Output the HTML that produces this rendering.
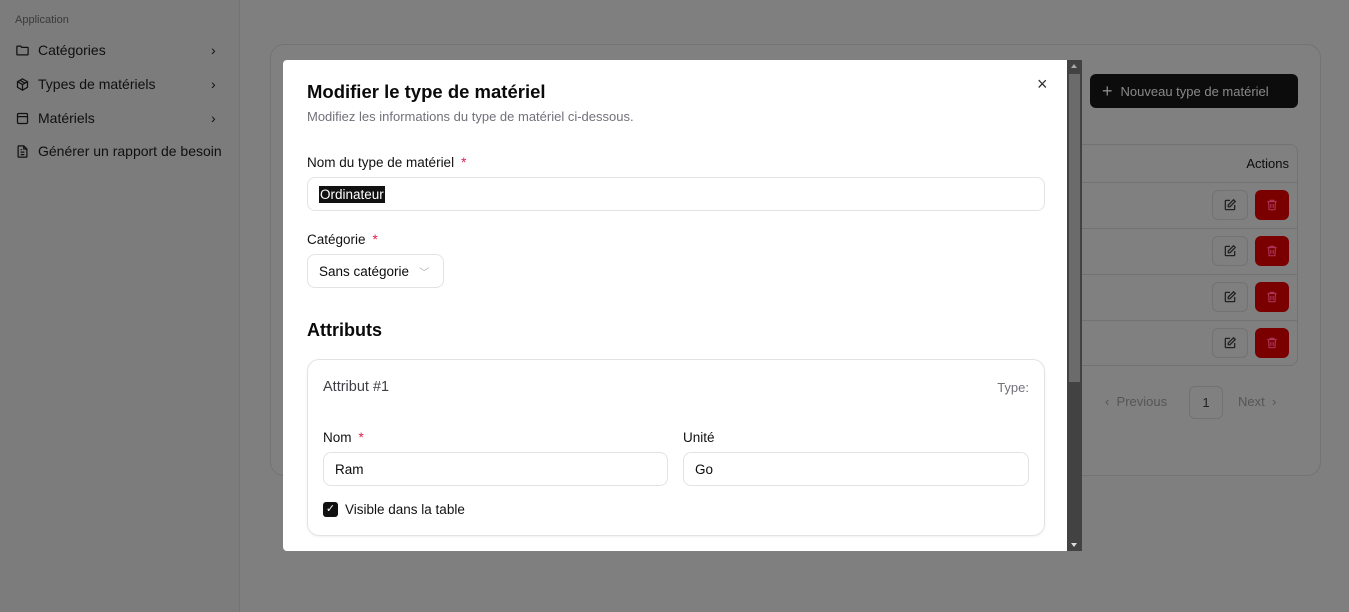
<!DOCTYPE html>
<html><head><meta charset="utf-8"><style>
*{box-sizing:border-box;margin:0;padding:0}
body{width:1349px;height:612px;overflow:hidden;background:#7f7f7f;font-family:"Liberation Sans",sans-serif;color:#0a0a0a;position:relative}
.side{position:absolute;left:0;top:0;width:240px;height:612px;background:#7c7c7c;border-right:1px solid #747474}
.side .h{position:absolute;left:15px;top:14px;font-size:11px;color:#3a3a3a}
.item{position:absolute;left:15px;font-size:14px;color:#0f0f0f;display:flex;align-items:center;gap:8px}
.item svg{width:15px;height:15px}
.chev{position:absolute;left:211px;font-size:14px;color:#111}
.card{position:absolute;left:270px;top:44px;width:1051px;height:432px;border:1px solid #737373;border-radius:14px;background:#808080}
.newbtn{position:absolute;left:1090px;top:74px;width:208px;height:34px;background:#0c0c0c;border-radius:6px;color:#8a8a8a;font-size:13px;display:flex;align-items:center;padding-left:12px;gap:8px}
.tbl{position:absolute;left:1060px;top:144px;width:238px;height:222px;border:1px solid #727272;border-radius:8px}
.tbl .hd{position:absolute;right:8px;top:11px;font-size:13px;color:#0c0c0c}
.row{position:absolute;left:0;right:0;height:1px;background:#727272}
.eb{position:absolute;left:1212px;width:36px;height:30px;border:1px solid #727272;border-radius:6px;background:#7f7f7f;display:flex;align-items:center;justify-content:center}
.db{position:absolute;left:1255px;width:34px;height:30px;border-radius:6px;background:#7a0000;display:flex;align-items:center;justify-content:center}
.pg{position:absolute;top:394px;font-size:13px;color:#555}
.modal{position:absolute;left:283px;top:60px;width:799px;height:491px;background:#fff;border-radius:4px 0 0 4px;overflow:hidden}
.sb{position:absolute;right:0;top:0;width:15px;height:491px;background:#424242}
.sb .th{position:absolute;left:2px;top:14px;width:11px;height:308px;background:#6b6b6b}
.m{position:absolute;left:24px}
.lbl{font-size:13.5px;color:#111}
.req{color:#e11d48;margin-left:7px}
.inp{position:absolute;height:34px;border:1px solid #e3e3e3;border-radius:8px;font-size:13.5px;display:flex;align-items:center;padding-left:11px}
.attr{position:absolute;left:24px;top:299px;width:738px;height:177px;border:1px solid #e3e3e3;border-radius:12px;box-shadow:0 1px 2px rgba(0,0,0,.06)}
</style></head><body>
<div class="side">
<div class="h">Application</div>
<div class="item" style="top:42px"><svg viewBox="0 0 24 24" fill="none" stroke="#111" stroke-width="2"><path d="M3 6a1 1 0 0 1 1-1h5l2 2h9a1 1 0 0 1 1 1v10a1 1 0 0 1-1 1H4a1 1 0 0 1-1-1z"/></svg>Catégories</div>
<div class="chev" style="top:42px">›</div>
<div class="item" style="top:76px"><svg viewBox="0 0 24 24" fill="none" stroke="#111" stroke-width="2"><path d="M12 3l8 4.5v9L12 21l-8-4.5v-9z M4 7.5l8 4.5 8-4.5 M12 12v9 M8 5.3l8 4.5"/></svg>Types de matériels</div>
<div class="chev" style="top:76px">›</div>
<div class="item" style="top:110px"><svg viewBox="0 0 24 24" fill="none" stroke="#111" stroke-width="2"><rect x="4" y="4" width="16" height="16" rx="2"/><path d="M4 9h16"/></svg>Matériels</div>
<div class="chev" style="top:110px">›</div>
<div class="item" style="top:143px"><svg viewBox="0 0 24 24" fill="none" stroke="#111" stroke-width="2"><path d="M14 3H6a1 1 0 0 0-1 1v16a1 1 0 0 0 1 1h12a1 1 0 0 0 1-1V8z M14 3v5h5 M9 13h6 M9 17h6 M9 9h2"/></svg>Générer un rapport de besoin</div>
</div>
<div class="card"></div>
<div class="newbtn"><span style="font-size:18px;font-weight:300">+</span> Nouveau type de matériel</div>
<div class="tbl"><div class="hd">Actions</div>
<div class="row" style="top:37px"></div><div class="row" style="top:83px"></div><div class="row" style="top:129px"></div><div class="row" style="top:175px"></div></div>
<div class="eb" style="top:190px"><svg width="14" height="14" viewBox="0 0 24 24" fill="none" stroke="#222" stroke-width="2.2"><path d="M12 4H5a1 1 0 0 0-1 1v14a1 1 0 0 0 1 1h14a1 1 0 0 0 1-1v-7 M18 3l3 3-9 9H9v-3z"/></svg></div>
<div class="db" style="top:190px"><svg width="14" height="14" viewBox="0 0 24 24" fill="none" stroke="#a35" stroke-width="2"><path d="M4 6h16 M9 6V4h6v2 M6 6l1 14h10l1-14 M10 10v7 M14 10v7"/></svg></div>
<div class="eb" style="top:236px"><svg width="14" height="14" viewBox="0 0 24 24" fill="none" stroke="#222" stroke-width="2.2"><path d="M12 4H5a1 1 0 0 0-1 1v14a1 1 0 0 0 1 1h14a1 1 0 0 0 1-1v-7 M18 3l3 3-9 9H9v-3z"/></svg></div>
<div class="db" style="top:236px"><svg width="14" height="14" viewBox="0 0 24 24" fill="none" stroke="#a35" stroke-width="2"><path d="M4 6h16 M9 6V4h6v2 M6 6l1 14h10l1-14 M10 10v7 M14 10v7"/></svg></div>
<div class="eb" style="top:282px"><svg width="14" height="14" viewBox="0 0 24 24" fill="none" stroke="#222" stroke-width="2.2"><path d="M12 4H5a1 1 0 0 0-1 1v14a1 1 0 0 0 1 1h14a1 1 0 0 0 1-1v-7 M18 3l3 3-9 9H9v-3z"/></svg></div>
<div class="db" style="top:282px"><svg width="14" height="14" viewBox="0 0 24 24" fill="none" stroke="#a35" stroke-width="2"><path d="M4 6h16 M9 6V4h6v2 M6 6l1 14h10l1-14 M10 10v7 M14 10v7"/></svg></div>
<div class="eb" style="top:328px"><svg width="14" height="14" viewBox="0 0 24 24" fill="none" stroke="#222" stroke-width="2.2"><path d="M12 4H5a1 1 0 0 0-1 1v14a1 1 0 0 0 1 1h14a1 1 0 0 0 1-1v-7 M18 3l3 3-9 9H9v-3z"/></svg></div>
<div class="db" style="top:328px"><svg width="14" height="14" viewBox="0 0 24 24" fill="none" stroke="#a35" stroke-width="2"><path d="M4 6h16 M9 6V4h6v2 M6 6l1 14h10l1-14 M10 10v7 M14 10v7"/></svg></div>
<div class="pg" style="left:1105px">‹&nbsp; Previous</div>
<div style="position:absolute;left:1189px;top:386px;width:34px;height:33px;border:1px solid #727272;border-radius:6px;font-size:13px;color:#222;display:flex;align-items:center;justify-content:center">1</div>
<div class="pg" style="left:1238px">Next &nbsp;›</div>

<div class="modal">
<div style="position:absolute;left:754px;top:15px;font-size:18px;color:#333;line-height:1">×</div>
<div class="m" style="top:21px;font-size:18.5px;font-weight:bold">Modifier le type de matériel</div>
<div class="m" style="top:49px;font-size:13px;color:#71717a">Modifiez les informations du type de matériel ci-dessous.</div>
<div class="m lbl" style="top:95px">Nom du type de matériel<span class="req">*</span></div>
<div class="inp" style="left:24px;top:117px;width:738px"><span style="background:#111;color:#fff;padding:1px 1px">Ordinateur</span></div>
<div class="m lbl" style="top:172px">Catégorie<span class="req">*</span></div>
<div class="inp" style="left:24px;top:194px;width:137px">Sans catégorie <span style="color:#aaa;margin-left:10px;font-size:10px">﹀</span></div>
<div class="m" style="top:260px;font-size:18px;font-weight:bold">Attributs</div>
<div class="attr">
<div style="position:absolute;left:15px;top:19px;font-size:14.5px;color:#3f3f46">Attribut #1</div>
<div style="position:absolute;right:15px;top:20px;font-size:13px;color:#71717a">Type:</div>
<div class="lbl" style="position:absolute;left:15px;top:70px">Nom<span class="req">*</span></div>
<div class="inp" style="left:15px;top:92px;width:345px">Ram</div>
<div class="lbl" style="position:absolute;left:375px;top:70px">Unité</div>
<div class="inp" style="left:375px;top:92px;width:346px">Go</div>
<div style="position:absolute;left:15px;top:142px;width:15px;height:15px;background:#111;border-radius:3px;color:#fff;font-size:11px;text-align:center;line-height:15px">✓</div>
<div class="lbl" style="position:absolute;left:37px;top:142px">Visible dans la table</div>
</div>
<div class="sb"><div class="th"></div>
<div style="position:absolute;left:4px;top:4px;border:3.5px solid transparent;border-bottom:4px solid #aaa;border-top:0"></div>
<div style="position:absolute;left:4px;bottom:4px;border:3.5px solid transparent;border-top:4px solid #ddd;border-bottom:0"></div></div>
</div>
</body></html>
